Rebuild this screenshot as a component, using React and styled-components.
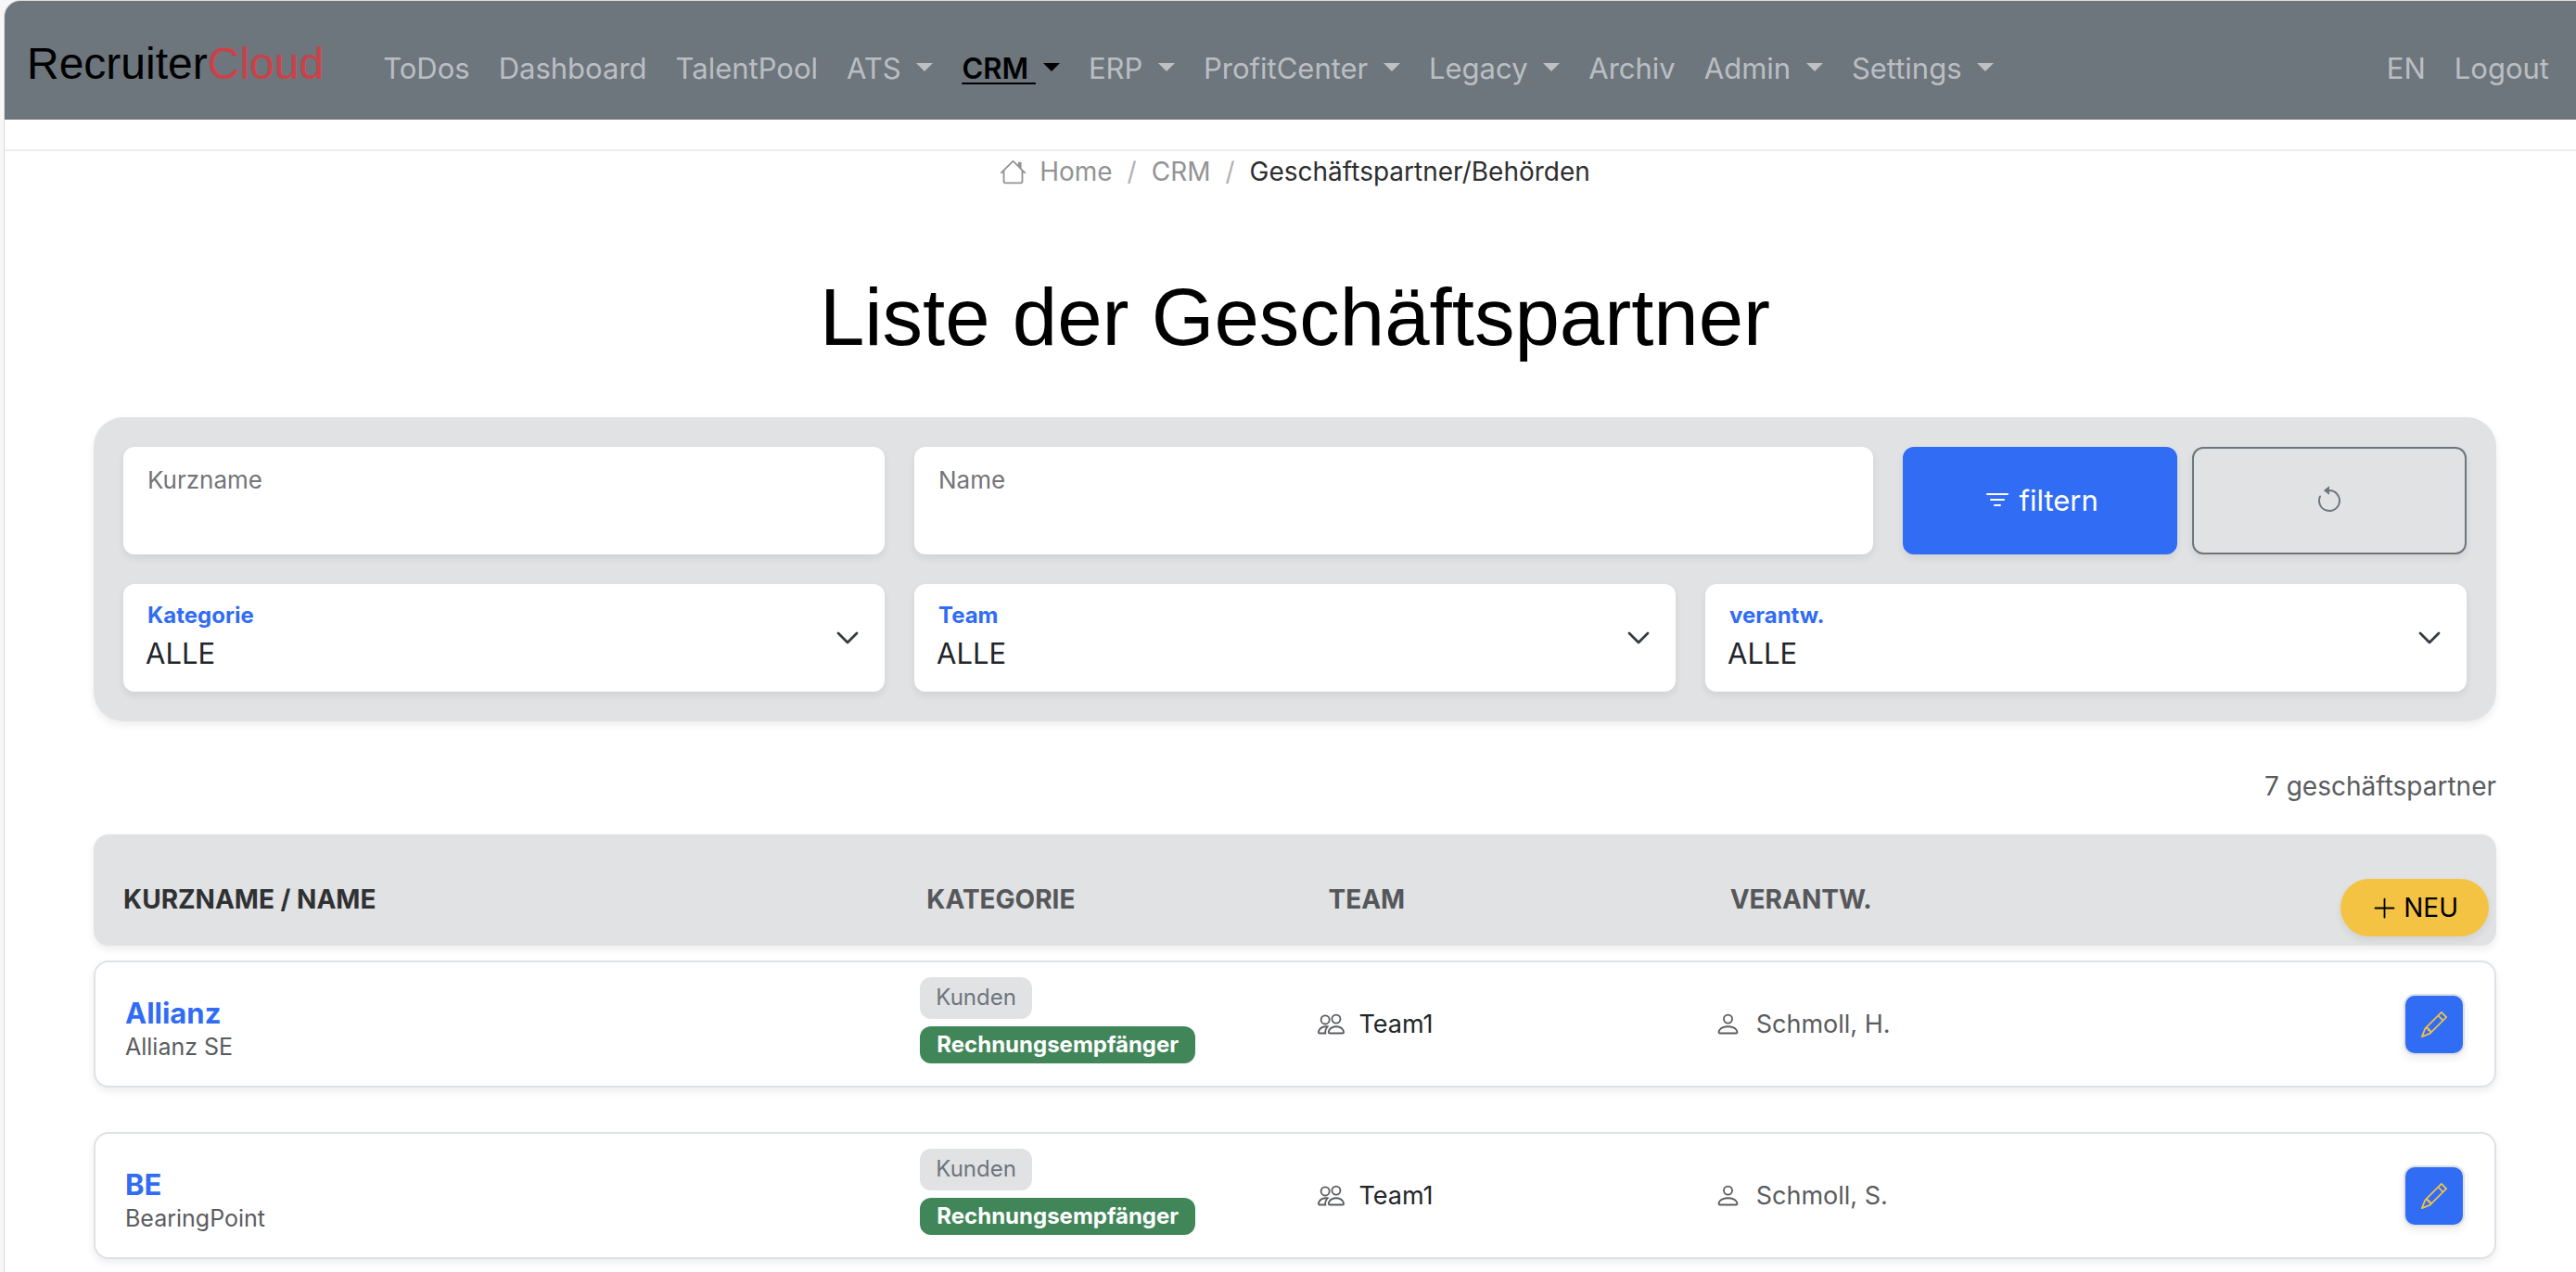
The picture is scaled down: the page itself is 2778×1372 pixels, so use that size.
import React from "react";
import styled, { createGlobalStyle, css } from "styled-components";
import {
  BsArrowCounterclockwise,
  BsFilter,
  BsHouse,
  BsPencil,
  BsPeople,
  BsPerson,
  BsPlusLg,
} from "react-icons/bs";

const GlobalStyle = createGlobalStyle`
  *, *::before, *::after { box-sizing: border-box; }
  body {
    margin: 0;
    background: #f7f7f8;
    color: #212529;
    font-family: Inter, "Noto Sans", sans-serif;
    font-size: 28px;
    line-height: 44px;
  }
  button, input, select { font: inherit; color: inherit; }
`;

const softShadow = css`
  box-shadow: 0 4px 8px rgba(0, 0, 0, 0.075);
`;

const Shell = styled.div`
  min-height: 100vh;
  margin-left: 4px;
  border: 1px solid #dcdcdc;
  border-width: 1px 0 0 1px;
  border-radius: 18px 0 0 0;
  overflow: hidden;
  background: #fff;
`;

const Navbar = styled.header`
  display: flex;
  align-items: baseline;
  height: 128px;
  padding: 32px 13px 0 24px;
  background: #6d757d;
`;

const Brand = styled.a`
  margin-right: 49px;
  color: #000;
  font-family: "Liberation Sans", Arial, sans-serif;
  font-size: 48px;
  line-height: 72px;
  text-decoration: none;
`;

const BrandAccent = styled.span`
  color: #cc4148;
`;

const NavGroup = styled.nav`
  display: flex;
  align-items: baseline;
  margin-left: ${(p) => (p.$end ? "auto" : "0")};
`;

const navItem = css`
  padding: 0 16px 0 15px;
  border: 0;
  background: none;
  color: ${(p) => (p.$active ? "#000" : "rgba(255, 255, 255, 0.55)")};
  font-size: 31px;
  font-weight: ${(p) => (p.$active ? 600 : 400)};
  line-height: 48px;
  text-decoration: none;
  white-space: pre;
`;

const NavLink = styled.a`
  ${navItem}
`;

const NavToggle = styled.button`
  ${navItem}
`;

const ToggleText = styled.span`
  text-decoration: ${(p) => (p.$active ? "underline 2px" : "none")};
  text-underline-offset: 4px;
`;

const Caret = styled.span`
  display: inline-block;
  margin-left: 8px;
  vertical-align: 8px;
  border: 9px solid transparent;
  border-top-color: currentColor;
  border-bottom: 0;
`;

const Page = styled.div`
  margin-top: 32px;
  padding: 0 86px 48px 96px;
  border-top: 2px solid #eee;
`;

const Breadcrumb = styled.nav`
  display: flex;
  justify-content: center;
  align-items: center;
  gap: 16px;
  color: #b0b1b2;
`;

const Crumb = styled.a`
  display: flex;
  align-items: center;
  gap: 14px;
  color: #929394;
  text-decoration: none;
`;

const CurrentCrumb = styled.span`
  color: #2d2e30;
`;

const Title = styled.h1`
  margin: 83px 0 56px;
  color: #000;
  font-family: "Liberation Sans", Arial, sans-serif;
  font-size: 87px;
  font-weight: 400;
  line-height: 104px;
  text-align: center;
`;

const FilterPanel = styled.form`
  display: grid;
  grid-template-columns: repeat(12, 1fr);
  gap: 32px;
  padding: 32px;
  border-radius: 32px;
  background: #e1e2e4;
  ${softShadow}
`;

const Field = styled.div`
  display: grid;
  grid-column: span ${(p) => p.$span};
  height: 116px;
  border-radius: 12px;
  background: #fff;
  ${softShadow}

  & > * {
    grid-area: 1 / 1;
  }
`;

const FieldLabel = styled.label`
  align-self: start;
  padding: ${(p) => (p.$floating ? "18px 26px" : "20px 26px")};
  color: ${(p) => (p.$floating ? "#316cf4" : "#737578")};
  font-size: ${(p) => (p.$floating ? "24px" : "26px")};
  font-weight: ${(p) => (p.$floating ? 700 : 400)};
  line-height: 32px;
  pointer-events: none;
`;

const fieldControl = css`
  width: 100%;
  padding: 52px 24px 18px;
  border: 0;
  border-radius: 12px;
  background: transparent;
  font-size: 31px;
  appearance: none;
`;

const TextInput = styled.input`
  ${fieldControl}
`;

const Select = styled.select`
  ${fieldControl}
`;

const Chevron = styled.svg`
  align-self: center;
  justify-self: end;
  width: 32px;
  height: 32px;
  margin-right: 24px;
  pointer-events: none;
`;

const FilterActions = styled.div`
  display: flex;
  grid-column: span 3;
  gap: 16px;
`;

const ActionButton = styled.button`
  display: flex;
  flex: 1;
  align-items: center;
  justify-content: center;
  gap: 8px;
  border: 2px solid ${(p) => (p.$primary ? "#316cf4" : "#6d757d")};
  border-radius: 12px;
  background: ${(p) => (p.$primary ? "#316cf4" : "transparent")};
  color: ${(p) => (p.$primary ? "#fff" : "#6d757d")};
  font-size: 31px;
  ${softShadow}
`;

const ResultCount = styled.p`
  margin: 48px 0 30px;
  color: #5a5c5f;
  text-align: right;
`;

const PartnerTable = styled.table`
  display: block;
`;

const TableHead = styled.thead`
  display: block;
`;

const HeadRow = styled.tr`
  display: grid;
  grid-template-columns: 866fr 433fr 433fr 650fr 168fr;
  align-items: end;
  height: 120px;
  padding: 0 8px 10px 32px;
  border-radius: 16px;
  background: #e1e2e4;
  ${softShadow}
`;

const HeadCell = styled.th`
  padding: 0 0 20px;
  color: ${(p) => (p.$strong ? "#303133" : "#55575a")};
  font-weight: 700;
  line-height: 40px;
  text-align: left;
  text-transform: uppercase;
`;

const ActionHeadCell = styled.th`
  padding: 0;
  font-weight: 400;
  text-align: right;
`;

const NewButton = styled.button`
  display: inline-flex;
  align-items: center;
  gap: 6px;
  height: 62px;
  padding: 0 33px;
  border: 0;
  border-radius: 31px;
  background: #f4c344;
  color: #000;
  vertical-align: top;
  ${softShadow}
`;

const TableBody = styled.tbody`
  display: flex;
  flex-direction: column;
  gap: 48px;
  margin-top: 16px;
`;

const Row = styled.tr`
  display: grid;
  grid-template-columns: 857fr 428fr 428fr 609fr 200fr;
  align-items: center;
  height: 137px;
  padding: 0 32px;
  border: 2px solid #dee2e6;
  border-radius: 16px;
  background: #fff;
  ${softShadow}
`;

const Cell = styled.td`
  padding: 0;
  text-align: ${(p) => (p.$end ? "right" : "left")};
`;

const NameCell = styled(Cell)`
  padding-top: 8px;
`;

const PartnerLink = styled.a`
  display: block;
  color: #316cf4;
  font-size: 31px;
  font-weight: 700;
  line-height: 40px;
  text-decoration: none;
`;

const PartnerName = styled.div`
  color: #5a5c5f;
  font-size: 25px;
  line-height: 32px;
`;

const Badges = styled.div`
  display: flex;
  flex-direction: column;
  align-items: flex-start;
  gap: 8px;
  padding-bottom: 8px;
`;

const Badge = styled.span`
  padding: ${(p) => (p.$solid ? "4px 18px" : "6px 17px 7px")};
  border-radius: 12px;
  background: ${(p) => (p.$solid ? "#418659" : "#e1e2e4")};
  color: ${(p) => (p.$solid ? "#fff" : "#6d757d")};
  font-size: 24px;
  font-weight: ${(p) => (p.$solid ? 700 : 400)};
  line-height: 32px;
`;

const IconText = styled.span`
  display: flex;
  align-items: center;
  gap: 16px;
  color: ${(p) => (p.$muted ? "#5a5c5f" : "#212529")};
  font-size: 27px;

  svg {
    color: #5a5c5f;
  }
`;

const EditButton = styled.button`
  display: inline-flex;
  align-items: center;
  justify-content: center;
  width: 66px;
  height: 66px;
  padding: 0;
  border: 2px solid #dee2e6;
  border-radius: 12px;
  background: #316cf4;
  color: #f4c344;
  vertical-align: top;
  ${softShadow}
`;

const NAV = [
  { label: "ToDos" },
  { label: "Dashboard" },
  { label: "TalentPool" },
  { label: "ATS", menu: true },
  { label: "CRM", menu: true, active: true },
  { label: "ERP", menu: true },
  { label: "ProfitCenter", menu: true },
  { label: "Legacy", menu: true },
  { label: "Archiv" },
  { label: "Admin", menu: true },
  { label: "Settings", menu: true },
];

const SELECTS = [
  { id: "category", label: "Kategorie" },
  { id: "team", label: "Team" },
  { id: "owner", label: "verantw." },
];

const PARTNERS = [
  { short: "Allianz", name: "Allianz SE", team: "Team1", owner: "Schmoll, H." },
  { short: "BE", name: "BearingPoint", team: "Team1", owner: "Schmoll, S." },
];

function NavEntry({ label, menu, active }) {
  if (!menu) return <NavLink href="#">{label}</NavLink>;
  return (
    <NavToggle type="button" $active={active}>
      <ToggleText $active={active}>{label + " "}</ToggleText>
      <Caret />
    </NavToggle>
  );
}

function TextField({ id, label, span }) {
  return (
    <Field $span={span}>
      <TextInput id={id} type="text" />
      <FieldLabel htmlFor={id}>{label}</FieldLabel>
    </Field>
  );
}

function SelectField({ id, label }) {
  return (
    <Field $span={4}>
      <Select id={id}>
        <option>ALLE</option>
      </Select>
      <FieldLabel htmlFor={id} $floating>
        {label}
      </FieldLabel>
      <Chevron viewBox="0 0 16 16" aria-hidden="true">
        <path
          d="m3 5.5 5 5 5-5"
          fill="none"
          stroke="#343a40"
          strokeWidth="1.4"
          strokeLinecap="round"
          strokeLinejoin="round"
        />
      </Chevron>
    </Field>
  );
}

function PartnerRow({ short, name, team, owner }) {
  return (
    <Row>
      <NameCell>
        <PartnerLink href="#">{short}</PartnerLink>
        <PartnerName>{name}</PartnerName>
      </NameCell>
      <Cell>
        <Badges>
          <Badge>Kunden</Badge>
          <Badge $solid>Rechnungsempfänger</Badge>
        </Badges>
      </Cell>
      <Cell>
        <IconText>
          <BsPeople size={29} />
          {team}
        </IconText>
      </Cell>
      <Cell>
        <IconText $muted>
          <BsPerson size={29} />
          {owner}
        </IconText>
      </Cell>
      <Cell $end>
        <EditButton type="button" aria-label="Bearbeiten">
          <BsPencil size={28} />
        </EditButton>
      </Cell>
    </Row>
  );
}

export default function App() {
  return (
    <>
      <GlobalStyle />
      <Shell>
        <Navbar>
          <Brand href="#">
            Recruiter<BrandAccent>Cloud</BrandAccent>
          </Brand>
          <NavGroup>
            {NAV.map((item) => (
              <NavEntry key={item.label} {...item} />
            ))}
          </NavGroup>
          <NavGroup $end>
            <NavLink href="#">EN</NavLink>
            <NavLink href="#">Logout</NavLink>
          </NavGroup>
        </Navbar>
        <Page>
          <Breadcrumb>
            <Crumb href="#">
              <BsHouse size={29} />
              Home
            </Crumb>
            <span>/</span>
            <Crumb href="#">CRM</Crumb>
            <span>/</span>
            <CurrentCrumb>Geschäftspartner/Behörden</CurrentCrumb>
          </Breadcrumb>
          <main>
            <Title>Liste der Geschäftspartner</Title>
            <FilterPanel>
              <TextField id="shortname" label="Kurzname" span={4} />
              <TextField id="name" label="Name" span={5} />
              <FilterActions>
                <ActionButton type="submit" $primary>
                  <BsFilter size={32} />
                  filtern
                </ActionButton>
                <ActionButton type="reset" aria-label="Zurücksetzen">
                  <BsArrowCounterclockwise size={32} />
                </ActionButton>
              </FilterActions>
              {SELECTS.map((item) => (
                <SelectField key={item.id} {...item} />
              ))}
            </FilterPanel>
            <ResultCount>7 geschäftspartner</ResultCount>
            <PartnerTable>
              <TableHead>
                <HeadRow>
                  <HeadCell $strong>Kurzname / Name</HeadCell>
                  <HeadCell>Kategorie</HeadCell>
                  <HeadCell>Team</HeadCell>
                  <HeadCell>verantw.</HeadCell>
                  <ActionHeadCell>
                    <NewButton type="button">
                      <BsPlusLg size={29} />
                      NEU
                    </NewButton>
                  </ActionHeadCell>
                </HeadRow>
              </TableHead>
              <TableBody>
                {PARTNERS.map((partner) => (
                  <PartnerRow key={partner.short} {...partner} />
                ))}
              </TableBody>
            </PartnerTable>
          </main>
        </Page>
      </Shell>
    </>
  );
}
